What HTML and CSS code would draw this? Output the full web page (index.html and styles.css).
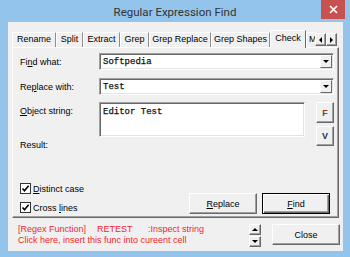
FILE: index.html
```html
<!DOCTYPE html>
<html lang="en">
<head>
    <meta charset="UTF-8">
    <title>Regular Expression Find</title>
    <link rel="stylesheet" href="styles.css">
</head>
<body>
    <div class="window">
        <div class="titlebar">
            <span class="title">Regular Expression Find</span>
            <span class="close-btn">
                <svg width="9" height="9" viewBox="0 0 9 9"><path d="M1 1L8 8M8 1L1 8" stroke="#fff" stroke-width="1.7"/></svg>
            </span>
        </div>
        <div class="client">
            <div class="tabs">
                <span class="tab tab-rename">Rename</span>
                <span class="tab tab-split">Split</span>
                <span class="tab tab-extract">Extract</span>
                <span class="tab tab-grep">Grep</span>
                <span class="tab tab-replace">Grep Replace</span>
                <span class="tab tab-shapes">Grep Shapes</span>
                <span class="tab tab-check active">Check</span>
                <span class="tab tab-more">M</span>
                <span class="tab-scroll">
                    <span class="mini-btn arrow-left"></span>
                    <span class="mini-btn arrow-right"></span>
                </span>
            </div>
            <div class="panel">
                <div class="row row-find">
                    <label class="field-label">Fi<u>n</u>d what:</label>
                    <div class="combo">
                        <span class="combo-text">Softpedia</span>
                        <span class="drop"></span>
                    </div>
                </div>
                <div class="row row-replace">
                    <label class="field-label">Re<u>p</u>lace with:</label>
                    <div class="combo">
                        <span class="combo-text">Test</span>
                        <span class="drop"></span>
                    </div>
                </div>
                <div class="row row-object">
                    <label class="field-label label-top"><u>O</u>bject string:</label>
                    <div class="textbox">Editor Test</div>
                    <div class="side-btns">
                        <span class="btn side-btn side-f">F</span>
                        <span class="btn side-btn side-v">V</span>
                    </div>
                </div>
                <div class="panel-bottom">
                    <div class="left-col">
                        <span class="result-label">Result:</span>
                        <div class="checks">
                            <div class="check-row">
                                <span class="checkbox"><svg width="9" height="9" viewBox="0 0 9 9"><path d="M1.5 4.5L3.5 6.8L7.6 1.8" stroke="#000" stroke-width="1.6" fill="none"/></svg></span>
                                <span><u>D</u>istinct case</span>
                            </div>
                            <div class="check-row">
                                <span class="checkbox"><svg width="9" height="9" viewBox="0 0 9 9"><path d="M1.5 4.5L3.5 6.8L7.6 1.8" stroke="#000" stroke-width="1.6" fill="none"/></svg></span>
                                <span>Cross <u>l</u>ines</span>
                            </div>
                        </div>
                    </div>
                    <div class="action-btns">
                        <span class="btn action-btn"><span><u>R</u>eplace</span></span>
                        <span class="btn action-btn default-btn"><span><u>F</u>ind</span></span>
                    </div>
                </div>
            </div>
            <div class="footer">
                <div class="func-info">
                    <div><span class="fn-name">[Regex Function]</span><span class="fn-code">RETEST</span><span>:Inspect string</span></div>
                    <div>Click here, insert this func into cureent cell</div>
                </div>
                <div class="spin">
                    <span class="mini-btn spin-up"></span>
                    <span class="mini-btn spin-down"></span>
                </div>
                <span class="btn action-btn close-action">Close</span>
            </div>
        </div>
    </div>
</body>
</html>
```

FILE: styles.css
```css
* {
    box-sizing: border-box;
}
body {
    margin: 0;
    font-family: "Liberation Sans", Arial, sans-serif;
    font-size: 9px;
    color: #000;
}
.window {
    width: 350px;
    height: 257px;
    background: #92c4ec;
    display: flex;
    flex-direction: column;
}
.titlebar {
    height: 22px;
    position: relative;
    display: flex;
}
.title {
    flex: 1;
    text-align: center;
    font-family: Roboto, sans-serif;
    font-size: 11.5px;
    line-height: 24px;
    color: #333;
}
.close-btn {
    position: absolute;
    top: 0;
    right: 5px;
    width: 24px;
    height: 19px;
    background: #c75050;
    display: flex;
    align-items: center;
    justify-content: center;
}
.client {
    flex: 1;
    margin: 0 7px 6px 8px;
    background: #f0f0f0;
    padding-top: 8px;
    display: flex;
    flex-direction: column;
}

/* tab strip */
.tabs {
    display: flex;
    height: 17px;
    margin: 0 4px;
    position: relative;
    z-index: 1;
}
.tab {
    height: 15px;
    margin-top: 2px;
    border-top: 1px solid #fff;
    border-left: 1px solid #fff;
    border-right: 1px solid #8e8e8e;
    text-align: center;
    line-height: 13px;
    white-space: nowrap;
    overflow: hidden;
}
.tab.active {
    height: 18px;
    margin-top: 0;
    background: #f0f0f0;
    line-height: 14px;
    border-right: 1px solid #696969;
}
.tab-rename { width: 44px; }
.tab-split { width: 27px; }
.tab-extract { width: 37px; }
.tab-grep { width: 29px; }
.tab-replace { width: 62px; }
.tab-shapes { width: 59px; }
.tab-check { width: 36px; }
.tab-more {
    width: 9px;
    text-align: left;
    padding-left: 2px;
    border-right: none;
}
.tab-scroll {
    display: flex;
    margin-top: 3px;
    height: 13px;
}
.mini-btn {
    display: flex;
    align-items: center;
    justify-content: center;
    background: #f0f0f0;
    border: 1px solid;
    border-color: #fff #696969 #696969 #fff;
    box-shadow: inset -1px -1px 0 #a0a0a0;
}
.tab-scroll .mini-btn {
    width: 11px;
    height: 13px;
}
.arrow-left::after {
    content: "";
    border-right: 3px solid #000;
    border-top: 3px solid transparent;
    border-bottom: 3px solid transparent;
}
.arrow-right::after {
    content: "";
    border-left: 3px solid #000;
    border-top: 3px solid transparent;
    border-bottom: 3px solid transparent;
}

/* tab page */
.panel {
    height: 171px;
    margin: 0 4px;
    border: 1px solid;
    border-color: #fff #696969 #696969 #fff;
    box-shadow: inset -1px -1px 0 #a0a0a0;
    padding: 5px 4px 0 7px;
    display: flex;
    flex-direction: column;
}
.row {
    display: flex;
    align-items: center;
}
.row-find {
    margin-bottom: 8px;
}
.row-replace {
    margin-bottom: 7px;
}
.row-object {
    align-items: flex-start;
}
.field-label {
    width: 79px;
    line-height: 12px;
}
.label-top {
    padding-top: 3px;
}
.combo, .textbox {
    background: #fff;
    border: 1px solid;
    border-color: #a0a0a0 #fff #fff #a0a0a0;
    box-shadow: inset 1px 1px 0 #696969, inset -1px -1px 0 #e3e3e3;
}
.combo {
    width: 235px;
    height: 17px;
    display: flex;
    align-items: center;
    justify-content: space-between;
}
.combo-text, .textbox {
    font-family: "Liberation Mono", "Courier New", monospace;
    font-size: 9px;
    color: #111;
    -webkit-text-stroke: 0.25px #111;
}
.combo-text {
    padding-left: 3px;
}
.drop {
    width: 12px;
    height: 13px;
    margin-right: 1px;
    display: flex;
    align-items: center;
    justify-content: center;
    background: #f0f0f0;
    border: 1px solid;
    border-color: #fff #696969 #696969 #fff;
}
.drop::after {
    content: "";
    border-top: 3px solid #000;
    border-left: 3px solid transparent;
    border-right: 3px solid transparent;
}
.textbox {
    width: 206px;
    height: 35px;
    padding: 3px 3px;
    line-height: 12px;
}
.side-btns {
    display: flex;
    flex-direction: column;
    margin-left: 11px;
}
.btn {
    display: flex;
    align-items: center;
    justify-content: center;
    background: #f0f0f0;
    border: 1px solid;
    border-color: #fff #696969 #696969 #fff;
    box-shadow: inset -1px -1px 0 #a0a0a0;
}
.side-btn {
    width: 18px;
    height: 21px;
    font-weight: bold;
    font-size: 9px;
}
.side-f {
    color: #8a3b1e;
    margin-bottom: 3px;
}
.side-v {
    height: 20px;
    color: #2a3060;
}
.panel-bottom {
    flex: 1;
    display: flex;
    justify-content: space-between;
    margin-top: -7px;
}
.left-col {
    display: flex;
    flex-direction: column;
}
.result-label {
    line-height: 12px;
}
.checks {
    margin-top: auto;
}
.check-row {
    height: 19px;
    display: flex;
    align-items: center;
}
.checkbox {
    width: 11px;
    height: 11px;
    margin-right: 2px;
    border: 1px solid #333;
    background: #fff;
    display: flex;
    align-items: center;
    justify-content: center;
}
.action-btns {
    display: flex;
    align-self: flex-end;
    margin: 0 4px 3px 0;
}
.action-btn {
    width: 68px;
    height: 21px;
}
.action-btns .action-btn + .action-btn {
    margin-left: 5px;
}
.default-btn {
    border: 1px solid #000;
    box-shadow: inset 1px 1px 0 #fff, inset -1px -1px 0 #696969, inset -2px -2px 0 #a0a0a0;
}

/* footer */
.footer {
    flex: 1;
    display: flex;
    align-items: flex-start;
    padding: 6px 3px 0 10px;
}
.func-info {
    flex: 1;
    color: #f0262a;
    font-size: 9px;
    line-height: 11px;
}
.fn-name {
    display: inline-block;
    width: 79px;
}
.fn-code {
    display: inline-block;
    width: 51px;
}
.spin {
    display: flex;
    flex-direction: column;
    margin-right: 11px;
}
.spin .mini-btn {
    width: 12px;
    height: 11px;
}
.spin .mini-btn + .mini-btn {
    margin-top: 1px;
}
.spin-up::after {
    content: "";
    border-bottom: 3px solid #000;
    border-left: 3px solid transparent;
    border-right: 3px solid transparent;
}
.spin-down::after {
    content: "";
    border-top: 3px solid #000;
    border-left: 3px solid transparent;
    border-right: 3px solid transparent;
}
```
